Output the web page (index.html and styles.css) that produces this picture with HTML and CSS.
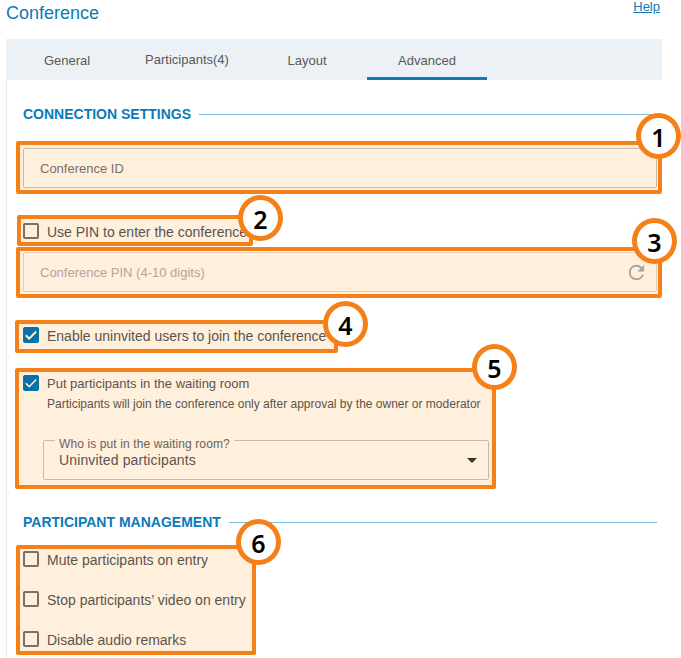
FILE: index.html
```html
<!DOCTYPE html>
<html lang="en">
<head>
<meta charset="utf-8">
<title>Conference</title>
<link rel="stylesheet" href="styles.css">
</head>
<body>
<header class="header">
  <h1 class="title">Conference</h1>
  <a class="help" href="#">Help</a>
</header>
<nav class="tabs">
  <a class="tab">General</a>
  <a class="tab tab-raised">Participants(4)</a>
  <a class="tab">Layout</a>
  <a class="tab tab-active">Advanced</a>
</nav>
<main class="panel">
  <h2 class="section section-connection"><span>CONNECTION SETTINGS</span></h2>

  <div class="callout callout-id">
    <div class="field">Conference ID</div>
    <span class="badge">1</span>
  </div>

  <div class="callout callout-use-pin">
    <div class="check"><i class="box"></i><span>Use PIN to enter the conference</span></div>
    <span class="badge">2</span>
  </div>

  <div class="callout callout-pin">
    <div class="field field-disabled">
      <span>Conference PIN (4-10 digits)</span>
      <svg class="refresh" viewBox="0 0 24 24"><path d="M17.65 6.35A7.96 7.96 0 0 0 12 4a8 8 0 1 0 7.73 10h-2.08A6 6 0 1 1 12 6c1.66 0 3.14.69 4.22 1.78L13 11h7V4z"/></svg>
    </div>
    <span class="badge">3</span>
  </div>

  <div class="callout callout-uninvited">
    <div class="check"><i class="box box-on"><svg viewBox="0 0 16 16"><path d="M2.8 8.3 6.2 11.7 13.2 4.5"/></svg></i><span>Enable uninvited users to join the conference</span></div>
    <span class="badge">4</span>
  </div>

  <div class="callout callout-waiting">
    <div class="check check-small"><i class="box box-on"><svg viewBox="0 0 16 16"><path d="M2.8 8.3 6.2 11.7 13.2 4.5"/></svg></i><span>Put participants in the waiting room</span></div>
    <p class="hint">Participants will join the conference only after approval by the owner or moderator</p>
    <fieldset class="select">
      <legend>Who is put in the waiting room?</legend>
      <div class="select-value"><span>Uninvited participants</span><i class="arrow"></i></div>
    </fieldset>
    <span class="badge">5</span>
  </div>

  <h2 class="section section-participants"><span>PARTICIPANT MANAGEMENT</span></h2>

  <div class="callout callout-management">
    <div class="check"><i class="box"></i><span>Mute participants on entry</span></div>
    <div class="check"><i class="box"></i><span>Stop participants’ video on entry</span></div>
    <div class="check"><i class="box"></i><span>Disable audio remarks</span></div>
    <span class="badge">6</span>
  </div>
</main>
</body>
</html>
```
FILE: styles.css
```css
* { box-sizing: border-box; }

body {
  margin: 0;
  height: 658px;
  overflow: hidden;
  background: #fff;
  color: #5b544c;
  font: 14px/16px "Liberation Sans", Arial, sans-serif;
}

.header {
  display: flex;
  justify-content: space-between;
  width: 660px;
  height: 39px;
  padding-left: 6px;
}

.title {
  margin: 2px 0 0;
  color: #0b7ab8;
  font-size: 18px;
  font-weight: 400;
  line-height: 22px;
}

.help {
  margin-top: -1px;
  color: #0b7ab8;
  font-size: 13px;
}

.tabs {
  display: flex;
  width: 656px;
  height: 41px;
  margin-left: 6px;
  padding-left: 1px;
  background: #ecf1f5;
}

.tab {
  width: 120px;
  padding-top: 14px;
  color: #595959;
  font-size: 13px;
  text-align: center;
}

.tab-raised { padding-top: 13px; }

.tab-active { border-bottom: 3px solid #0b7ab8; }

.panel {
  height: 578px;
  margin-left: 6px;
  padding-top: 26px;
  border-left: 1px solid #e6eef5;
}

.section {
  display: flex;
  align-items: center;
  gap: 8px;
  width: 634px;
  height: 16px;
  margin: 0 0 0 16px;
  color: #0b7ab8;
  font-size: 14px;
  line-height: 16px;
}

.section::after {
  content: "";
  flex: 1;
  height: 1px;
  background: #7bb8d9;
}

.section-participants { margin-top: 25px; }

.callout {
  position: relative;
  border: 4px solid #f58018;
  border-radius: 2px;
  background: #ffefdd;
}

.callout-id {
  width: 646px;
  height: 53px;
  margin: 19px 0 0 9px;
  padding: 3px 1px 0 3px;
}

.callout-use-pin {
  width: 236px;
  height: 31px;
  margin: 21px 0 0 10px;
  padding: 4px 0 0 2px;
}

.callout-pin {
  width: 646px;
  height: 51px;
  margin: 1px 0 0 9px;
  padding: 1px 1px 0 3px;
}

.callout-uninvited {
  width: 323px;
  height: 33px;
  margin: 22px 0 0 8px;
  padding: 3px 0 0 4px;
}

.callout-waiting {
  width: 481px;
  height: 121px;
  margin: 15px 0 0 8px;
  padding: 3px 3px 0 4px;
}

.callout-management {
  display: flex;
  flex-direction: column;
  gap: 24px;
  width: 240px;
  height: 110px;
  margin: 15px 0 0 9px;
  padding: 2px 0 0 3px;
}

.field {
  display: flex;
  align-items: center;
  justify-content: space-between;
  height: 40px;
  padding: 2px 8px 0 16px;
  border: 1px solid #c8b9a9;
  border-radius: 2px;
  color: #7a7067;
  font-size: 13px;
}

.field-disabled {
  border-color: #ddcdbd;
  color: #b2a599;
}

.refresh {
  width: 23px;
  height: 23px;
  margin-top: -2px;
  fill: #aea295;
}

.check {
  display: flex;
  gap: 8px;
  height: 16px;
  line-height: 18px;
  white-space: nowrap;
}

.check-small { font-size: 13px; }

.box {
  flex: none;
  width: 16px;
  height: 16px;
  border: 2px solid #7a7067;
  border-radius: 2px;
}

.box-on {
  border: 0;
  background: #0872a4;
}

.box-on svg {
  display: block;
  fill: none;
  stroke: #ffefdd;
  stroke-width: 2;
}

.check-small .box-on svg { stroke-width: 1.6; }

.hint {
  margin: 5px 0 0 24px;
  font-size: 12px;
  line-height: 16px;
  white-space: nowrap;
}

.select {
  height: 50px;
  margin: 18px 0 0 20px;
  padding: 0 11px 0 11px;
  border: 1px solid #c8b9a9;
  border-radius: 2px;
}

.select legend {
  height: 20px;
  padding: 7px 4px 0;
  color: #6c635a;
  font-size: 12px;
  letter-spacing: 0.11px;
  line-height: 14px;
}

.select-value {
  display: flex;
  align-items: center;
  justify-content: space-between;
  margin-top: 2px;
  padding-left: 4px;
  letter-spacing: 0.14px;
}

.arrow {
  border: 5px solid transparent;
  border-top-color: #332f2c;
  border-bottom: 0;
}

.badge {
  position: absolute;
  width: 45px;
  height: 46px;
  border: 5px solid #f58018;
  border-radius: 50%;
  background: #fff;
  color: #000;
  font: 600 25px/38px "Noto Sans", "Open Sans", sans-serif;
  text-align: center;
}

.callout-id .badge { left: 616px; top: -32px; }
.callout-use-pin .badge { left: 217px; top: -24px; }
.callout-pin .badge { left: 612px; top: -33px; }
.callout-uninvited .badge { left: 304px; top: -23px; }
.callout-waiting .badge { left: 453px; top: -28px; }
.callout-management .badge { left: 216px; top: -30px; }
```
